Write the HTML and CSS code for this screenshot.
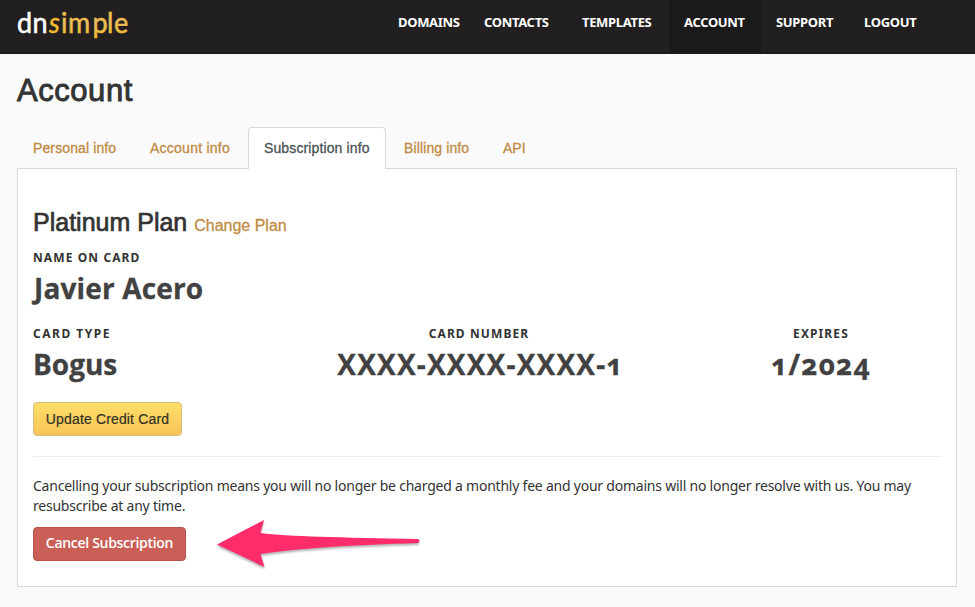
FILE: index.html
```html
<!DOCTYPE html>
<html lang="en">
<head>
<meta charset="utf-8">
<title>Account</title>
<link rel="stylesheet" href="styles.css">
</head>
<body>
<header class="topbar">
  <a class="logo" aria-label="dnsimple">
    <svg width="114" height="48" viewBox="0 0 114 48">
      <defs><linearGradient id="gold" x1="0" y1="0" x2="0" y2="1"><stop offset="0" stop-color="#f2c531"/><stop offset=".55" stop-color="#ecbd5c"/><stop offset="1" stop-color="#f0bc20"/></linearGradient></defs>
      <g transform="translate(0 33) scale(1 1.1)">
        <text class="logo-dn" x="0 15.500" y="0">dn</text>
        <text class="logo-s" x="32" y="0">s</text>
        <text class="logo-simple" x="44 51 75.500 90 97" y="0">imple</text>
      </g>
    </svg>
  </a>
  <nav class="nav">
    <a class="nav-link w1"><span>DOMAINS</span></a>
    <a class="nav-link w2"><span>CONTACTS</span></a>
    <a class="nav-link w3"><span>TEMPLATES</span></a>
    <a class="nav-link w4 active"><span>ACCOUNT</span></a>
    <a class="nav-link w5"><span>SUPPORT</span></a>
    <a class="nav-link w6"><span>LOGOUT</span></a>
  </nav>
</header>
<main class="page">
  <h1>Account</h1>
  <div class="tabs">
    <a class="tab t1">Personal info</a>
    <a class="tab t2">Account info</a>
    <a class="tab t3 selected">Subscription info</a>
    <a class="tab t4">Billing info</a>
    <a class="tab t5">API</a>
  </div>
  <section class="panel">
    <h2>Platinum Plan <a class="change">Change Plan</a></h2>
    <div class="field">
      <div class="label">NAME ON CARD</div>
      <div class="value name">Javier Acero</div>
    </div>
    <div class="card-row">
      <div class="field"><div class="label type-label">CARD TYPE</div><div class="value type">Bogus</div></div>
      <div class="field center"><div class="label">CARD NUMBER</div><div class="value number">XXXX-XXXX-XXXX-1</div></div>
      <div class="field center"><div class="label">EXPIRES</div><div class="value expires">1/2024</div></div>
    </div>
    <button class="btn update">Update Credit Card</button>
    <hr>
    <p class="note"><span>Cancelling your subscription means you will no longer be charged a monthly fee and your domains will no longer resolve with us. You may</span> <span>resubscribe at any time.</span></p>
    <div class="cancel-row">
      <button class="btn cancel">Cancel Subscription</button>
      <svg class="arrow" width="210" height="56" viewBox="0 0 210 56">
        <path d="M2 27.500L49 3L45.500 16C74 19.500 124 20.500 203 22Q206 24 203 26C140 28 84 31 45.500 37L49.500 50Z"/>
      </svg>
    </div>
  </section>
</main>
</body>
</html>
```
FILE: styles.css
```css
* { box-sizing: border-box; }
body { margin: 0; height: 607px; overflow: hidden; background: #fafafa; color: #333; font-family: "Open Sans", sans-serif; }
.topbar { display: flex; height: 54px; background: #221f20; border-bottom: 1px solid #191718; }
.logo { width: 365px; padding-left: 17px; }
.logo text { font-family: Lato, sans-serif; font-size: 27px; stroke-width: .5px; }
.logo .logo-dn { fill: #fff; stroke: #fff; }
.logo .logo-s { fill: #f2bc2c; stroke: #f2bc2c; font-style: italic; }
.logo .logo-simple { fill: url(#gold); stroke: url(#gold); }
.nav { display: flex; margin-left: 17px; }
.nav-link { height: 54px; padding: 13px 0 0 15px; color: #fff; font: 700 13px/18px "Noto Sans", sans-serif; letter-spacing: -.33px; white-space: nowrap; }
.w1 { width: 87px; padding-left: 16px; }
.w2 { width: 98px; }
.w3 { width: 102px; }
.w4 { width: 92px; }
.w5 { width: 88px; }
.w6 { width: 90px; }
.active { background: #1a1a1a; }
.page { padding: 19px 18px 0 17px; }
h1 { margin: 0 0 19px; font: 400 31px/35px "Liberation Sans", sans-serif; letter-spacing: .55px; -webkit-text-stroke: .9px #333; }
.tabs { display: flex; height: 42px; margin-bottom: -1px; position: relative; }
.tab { padding: 11px 0 0 16px; font: 14px/20px "Liberation Sans", sans-serif; letter-spacing: .12px; color: #bf8b45; -webkit-text-stroke: .3px; white-space: nowrap; }
.t1 { width: 117px; }
.t2 { width: 114px; letter-spacing: .25px; }
.t3 { width: 138px; }
.t4 { width: 101px; padding-left: 18px; }
.t5 { padding-left: 16px; letter-spacing: 0; }
.selected { padding: 10px 0 0 15px; background: #fff; color: #4c5257; border: 1px solid #d9d9d9; border-bottom: 0; border-radius: 4px 4px 0 0; }
.panel { height: 419px; padding: 37px 15px 0; background: #fff; border: 1px solid #d9d9d9; }
h2 { margin: 0 0 3px; font: 400 25px/32px "Liberation Sans", sans-serif; -webkit-text-stroke: .7px; white-space: nowrap; }
.change { font-size: 16px; color: #bf8b45; -webkit-text-stroke: .3px; }
.label { height: 20px; padding-top: 3px; font: 700 12px/20px "Noto Sans", sans-serif; letter-spacing: 1.1px; white-space: nowrap; }
.type-label { letter-spacing: 1.5px; }
.value { height: 44px; margin-top: 1px; color: #414141; font: 700 28px/45px "Open Sans", sans-serif; font-feature-settings: "onum"; -webkit-text-stroke: .3px; white-space: nowrap; }
.name { padding-left: 1px; letter-spacing: .15px; }
.number { padding-left: 3px; letter-spacing: 1.2px; }
.expires { letter-spacing: 1.2px; }
.card-row { display: grid; grid-template-columns: 293px 306px 378px; margin-top: 11px; }
.center { text-align: center; }
.btn { display: block; height: 34px; padding: 0; border-radius: 4px; text-align: center; white-space: nowrap; }
.update { width: 149px; margin-top: 16px; border: 1px solid #d1bd80; background: linear-gradient(#fddf69, #f9c358); color: #333125; font: 14px "Liberation Sans", sans-serif; letter-spacing: .15px; -webkit-text-stroke: .2px; }
hr { height: 1px; margin: 20px 0 19px; border: 0; background: #eee; }
.note { margin: 0; font: 14px/20px "Noto Sans", sans-serif; letter-spacing: -.225px; white-space: nowrap; }
.note span { display: block; }
.cancel-row { display: flex; margin-top: 11px; }
.cancel { width: 153px; border: 1px solid #b85149; background: #c95f57; color: #fff; font: 600 14px "Open Sans", sans-serif; letter-spacing: -.3px; padding-bottom: 4px; }
.arrow { margin: -10px 0 0 29px; filter: drop-shadow(0 2px 1px rgba(0,0,0,.3)); }
.arrow path { fill: #ff2c6c; }
```
